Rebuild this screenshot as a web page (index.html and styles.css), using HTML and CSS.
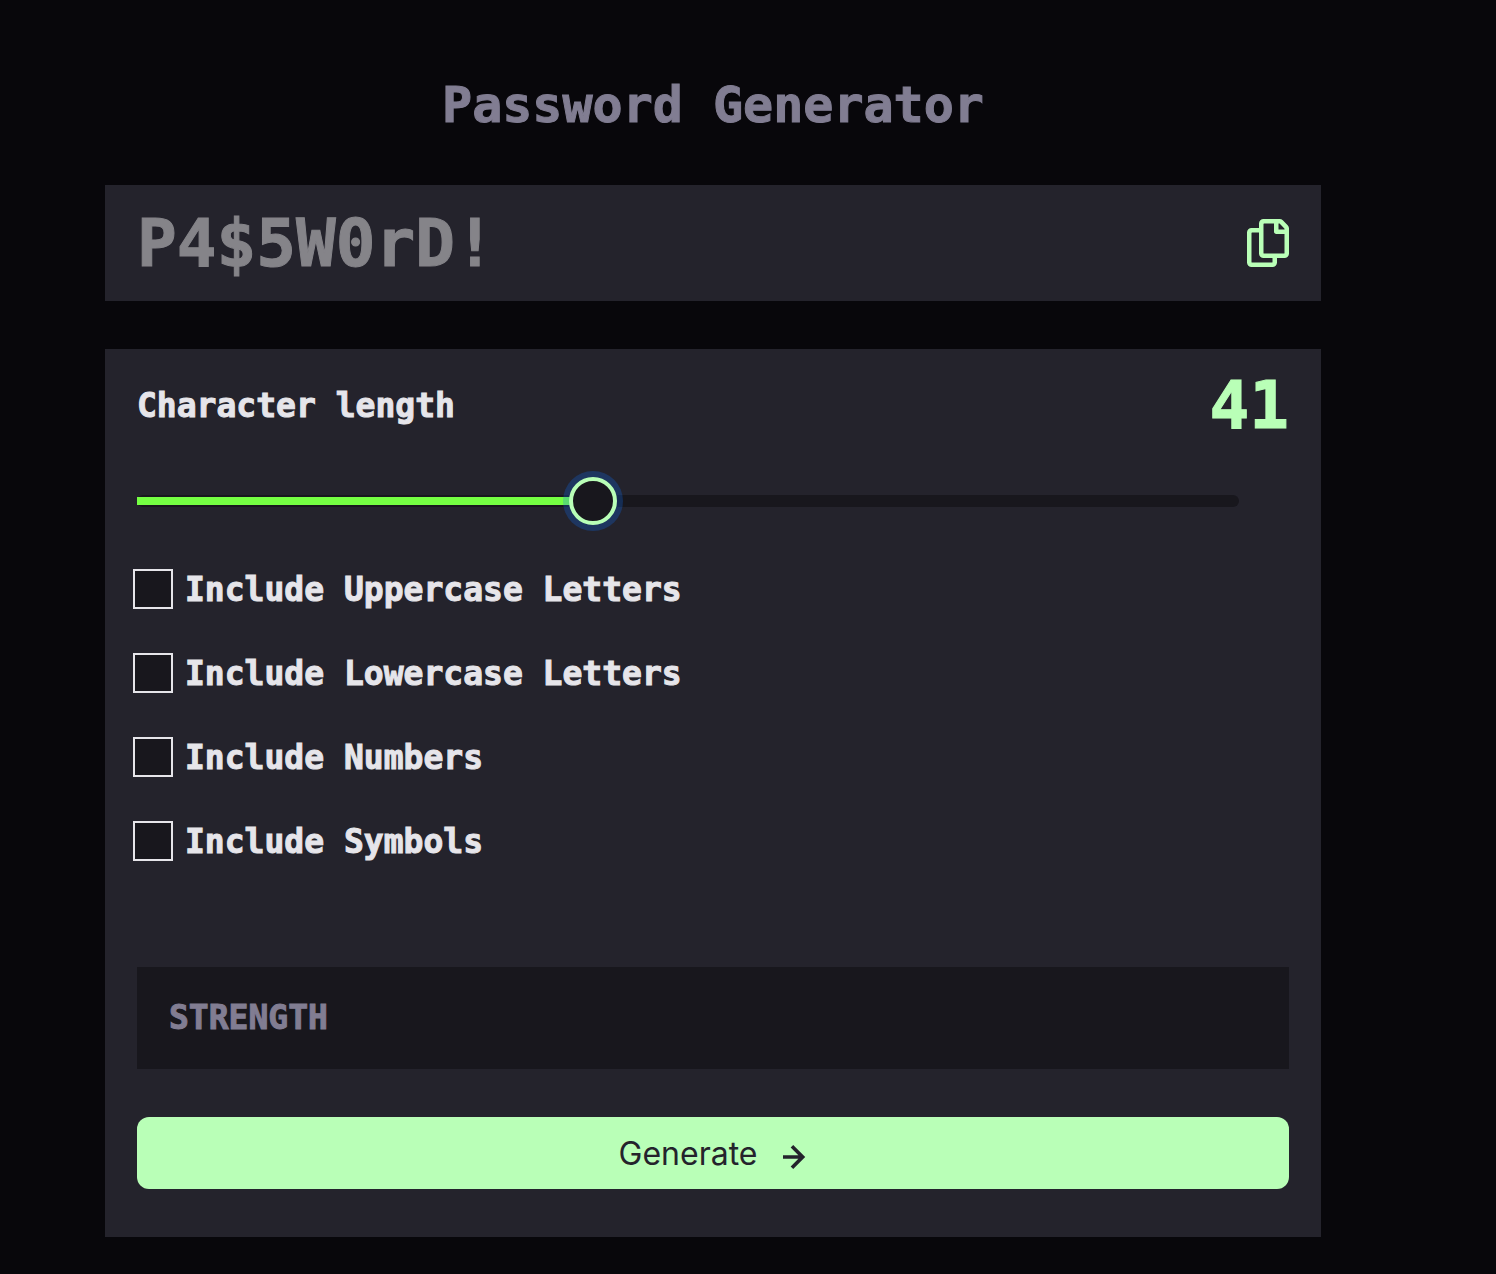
FILE: index.html
```html
<!DOCTYPE html>
<html lang="en">
<head>
<meta charset="utf-8">
<meta name="viewport" content="width=device-width, initial-scale=1">
<title>Password Generator</title>
<link rel="stylesheet" href="styles.css">
</head>
<body>
<main class="generator">
  <h1 class="title">Password Generator</h1>

  <div class="output">
    <input class="output-text" type="text" placeholder="P4$5W0rD!" aria-label="Generated password" readonly>
    <button class="copy" type="button" aria-label="Copy password">
      <svg width="42" height="48" viewBox="0 0 21 24" fill="currentColor" aria-hidden="true"><path d="M20.341 3.091 17.909.659A2.25 2.25 0 0 0 16.319 0H8.25A2.25 2.25 0 0 0 6 2.25V4.5H2.25A2.25 2.25 0 0 0 0 6.75v15A2.25 2.25 0 0 0 2.25 24h10.5A2.25 2.25 0 0 0 15 21.75V19.5h3.75A2.25 2.25 0 0 0 21 17.25V4.682a2.25 2.25 0 0 0-.659-1.591ZM12.469 21.75H2.53a.281.281 0 0 1-.281-.281V7.03a.281.281 0 0 1 .281-.281H6v10.5a2.25 2.25 0 0 0 2.25 2.25h4.5v1.969a.282.282 0 0 1-.281.281Zm6-4.5H8.53a.281.281 0 0 1-.281-.281V2.53a.281.281 0 0 1 .281-.281H13.5v4.125c0 .621.504 1.125 1.125 1.125h4.125v9.469a.282.282 0 0 1-.281.281Zm.281-12h-3V2.25h.451c.075 0 .147.03.2.082L18.667 4.8a.283.283 0 0 1 .082.199v.251Z"/></svg>
    </button>
  </div>

  <form class="panel">
    <div class="length">
      <label for="length">Character length</label>
      <output class="length-value" for="length">41</output>
    </div>
    <div class="slider">
      <input class="slider-input" id="length" type="range" min="0" max="100" value="41">
    </div>

    <div class="options">
      <label class="option"><input class="check" type="checkbox">Include Uppercase Letters</label>
      <label class="option"><input class="check" type="checkbox">Include Lowercase Letters</label>
      <label class="option"><input class="check" type="checkbox">Include Numbers</label>
      <label class="option"><input class="check" type="checkbox">Include Symbols</label>
    </div>

    <div class="strength">STRENGTH</div>

    <button class="generate" type="button">
      <span>Generate</span>
      <svg width="24" height="24" viewBox="0 0 12 12" fill="currentColor" aria-hidden="true"><path d="m5.106 12 6-6-6-6-1.265 1.265 3.841 3.841H.001v1.788h7.681l-3.841 3.841z"/></svg>
    </button>
  </form>
</main>
</body>
</html>
```
FILE: styles.css
```css
* {
  box-sizing: border-box;
}

body {
  margin: 0;
  background: #08070b;
  color: #e6e5ea;
  font: bold 33px/44px "DejaVu Sans Mono", monospace;
  -webkit-text-stroke: 1px;
}

.generator {
  padding: 72px 175px 36px 105px;
}

.title {
  margin: 0 0 46px;
  color: #817d92;
  font-size: 50px;
  line-height: 67px;
  text-align: center;
}

.output {
  display: flex;
  align-items: center;
  gap: 32px;
  height: 116px;
  margin-bottom: 48px;
  padding: 0 32px;
  background: #24232c;
}

.output-text {
  flex: 1;
  min-width: 0;
  padding: 2px 0 0;
  border: 0;
  background: none;
  color: inherit;
  font: bold 66px/84px "DejaVu Sans Mono", monospace;
}

.output-text::placeholder {
  color: #858489;
  opacity: 1;
}

.copy {
  padding: 0;
  border: 0;
  background: none;
  color: #b9ffb7;
}

.copy svg {
  display: block;
}

.panel {
  padding: 16px 32px 48px;
  background: #24232c;
}

.length {
  display: flex;
  align-items: center;
  justify-content: space-between;
}

.length-value {
  color: #b9ffb7;
  font-size: 66px;
  line-height: 82px;
}

.slider {
  display: flex;
  align-items: center;
  height: 12px;
  margin: 48px 50px 60px 0;
  border-radius: 6px;
  background: #18171d;
}

.slider-input {
  flex: 1;
  height: 48px;
  margin: 0;
  appearance: none;
  outline: 0;
  background: linear-gradient(#75ff43, #75ff43) left / 41% 8px no-repeat;
}

.slider-input::-webkit-slider-thumb {
  appearance: none;
  width: 48px;
  height: 48px;
  border: 4px solid #b9ffb7;
  border-radius: 50%;
  background: #18171d;
  box-shadow: 0 0 0 6px rgba(13, 110, 253, 0.25);
}

.options {
  display: grid;
  gap: 38px;
}

.option {
  display: flex;
  align-items: center;
  gap: 12px;
  line-height: 46px;
}

.check {
  width: 40px;
  height: 40px;
  margin: 0 0 2px -4px;
  appearance: none;
  border: 2px solid #e6e5ea;
  background: #18171d;
}

.strength {
  margin: 102px 0 48px;
  padding: 29px 32px;
  background: #18171d;
  color: #817d92;
}

.generate {
  display: flex;
  align-items: center;
  justify-content: center;
  gap: 26px;
  width: 100%;
  height: 72px;
  padding: 2px 6px 0;
  border: 0;
  border-radius: 12px;
  background: #b9ffb7;
  color: #24232c;
  font: 32px/40px Inter, sans-serif;
  -webkit-text-stroke: 0;
}

.generate svg {
  margin-top: 6px;
}
```
